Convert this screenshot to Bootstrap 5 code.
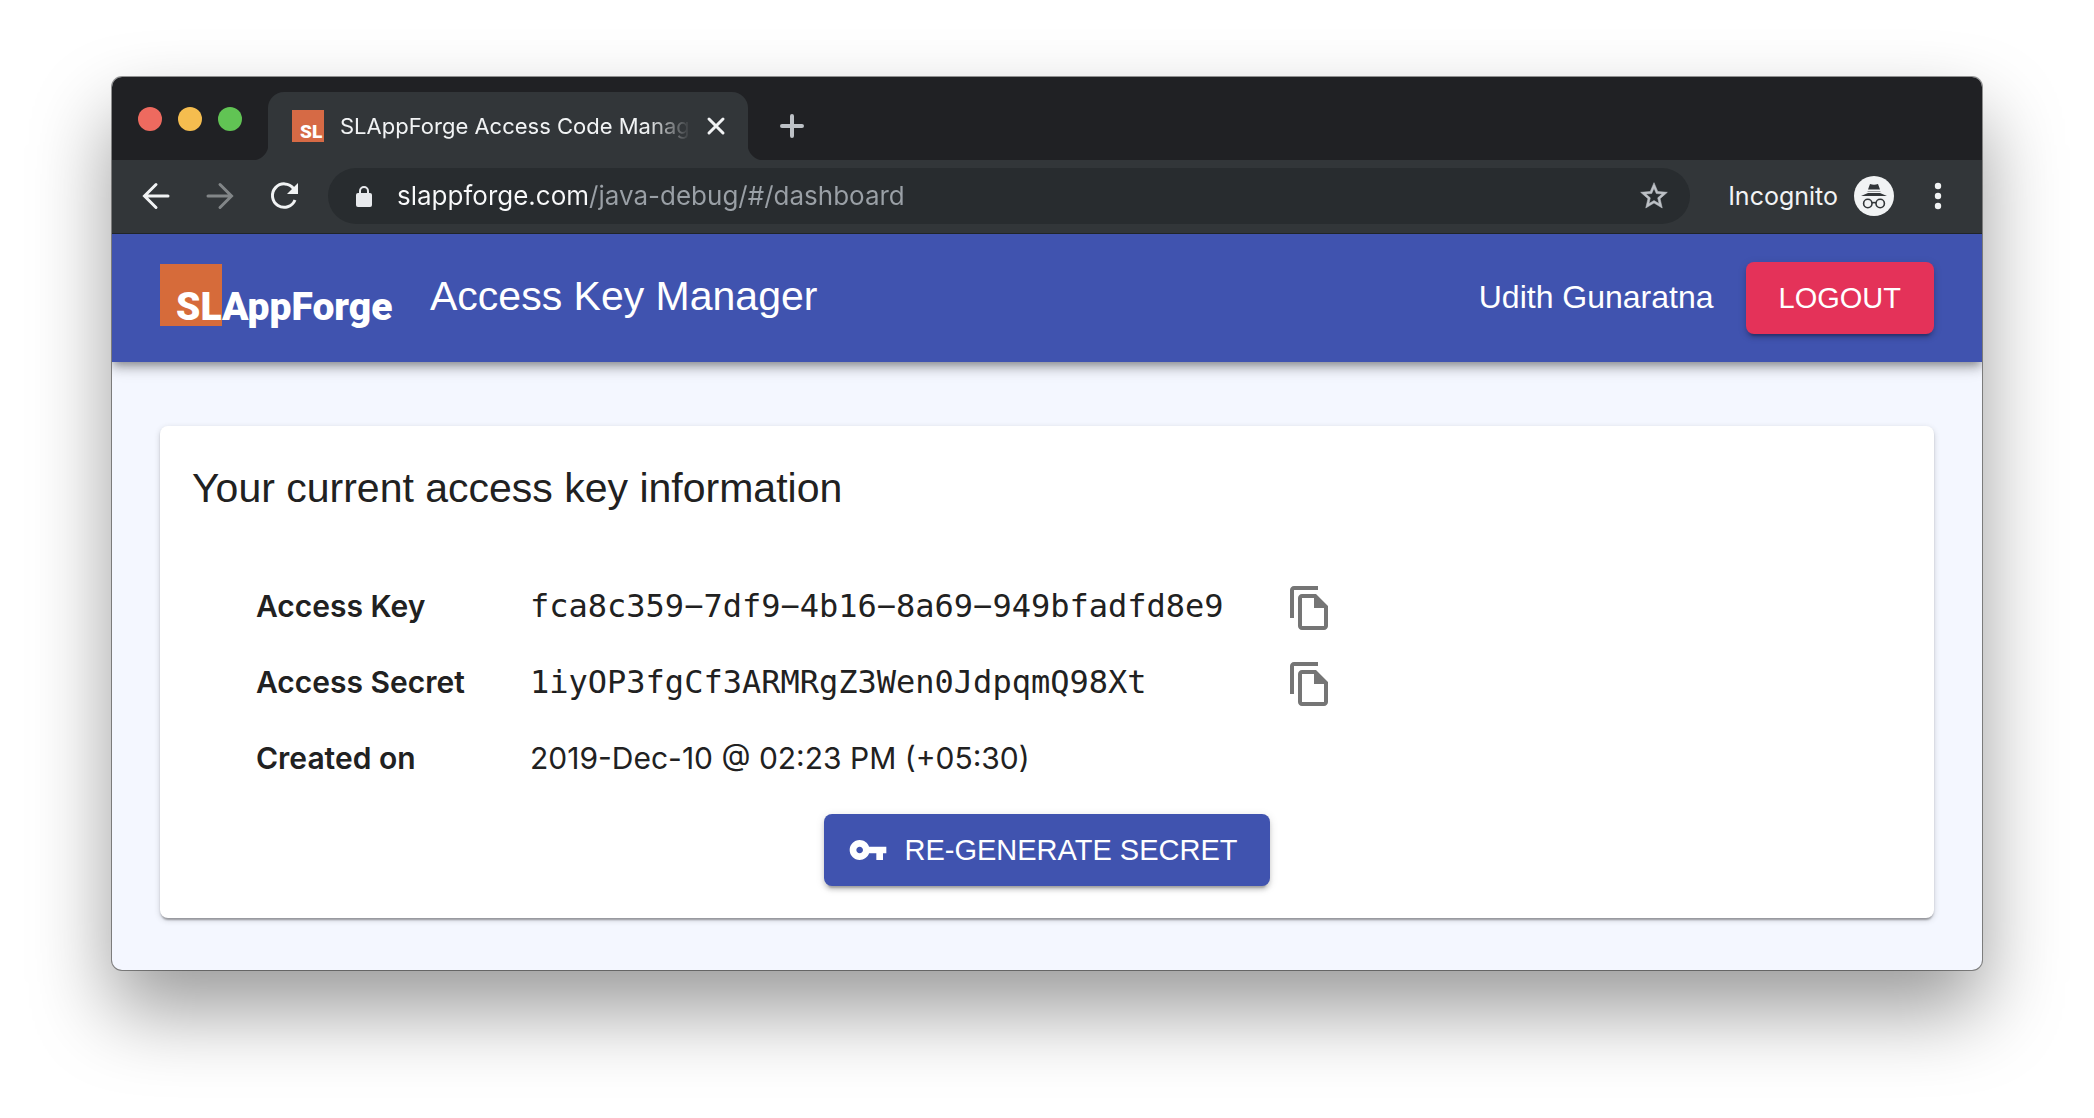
<!DOCTYPE html>
<html lang="en">
<head>
<meta charset="utf-8">
<meta name="viewport" content="width=device-width, initial-scale=1">
<title>SLAppForge Access Code Manager</title>
<link href="https://cdn.jsdelivr.net/npm/bootstrap@5.3.0/dist/css/bootstrap.min.css" rel="stylesheet">
<style>
  :root { --ui: Inter, Roboto, sans-serif; --page: "Liberation Sans", Arial, sans-serif; --indigo: #4053af; --ink: #212121; }
  body { min-height: 100vh; background: #fff; color: var(--ink); font-family: var(--page); padding: 77px 112px; }
  svg { display: block; flex: none; }
  button { font-family: inherit; }
  .browser { border-radius: 10px; background: #f4f7ff; box-shadow: 0 0 0 1px rgba(0,0,0,.4), 0 40px 80px rgba(0,0,0,.4); }
  .plain-btn { display: block; border: 0; background: none; padding: 0; color: #f1f3f4; }

  .tab-strip { background: #202124; height: 83px; border-radius: 10px 10px 0 0; padding: 15px 26px 0; }
  .lights { gap: 16px; padding-top: 15px; margin-right: 26px; }
  .light { width: 24px; height: 24px; border-radius: 50%; }
  .light-close { background: #ee6a5f; }
  .light-min { background: #f5bd4f; }
  .light-max { background: #61c454; }
  .browser-tab { position: relative; width: 480px; height: 68px; background: #323639; border-radius: 16px 16px 0 0; padding: 0 21px 0 24px; color: #f1f3f4; font: 22px/32px var(--ui); }
  .browser-tab::before, .browser-tab::after { content: ""; position: absolute; bottom: 0; width: 16px; height: 16px; }
  .browser-tab::before { right: 100%; background: radial-gradient(circle at 0 0, #202124 16px, #323639 17px); }
  .browser-tab::after { left: 100%; background: radial-gradient(circle at 100% 0, #202124 16px, #323639 17px); }
  .tab-title { margin-left: 16px; margin-right: 14px; overflow: hidden; white-space: nowrap; color: inherit; text-decoration: none;
    -webkit-mask-image: linear-gradient(to right, #000 calc(100% - 44px), transparent); mask-image: linear-gradient(to right, #000 calc(100% - 44px), transparent); }
  .new-tab { margin-left: 32px; }

  .toolbar { background: #323639; height: 74px; border-bottom: 1px solid #202528; padding: 8px 36px 10px 28px; font: 26px/32px var(--ui); color: #f1f3f4; }
  .nav-keys { gap: 32px; margin-right: 28px; }
  .omnibox { background: #282c2f; border-radius: 28px; height: 56px; padding: 0 20px 0 27px; }
  .url-input { border: 0; outline: 0; padding: 0; margin-left: 24px; min-width: 0; font: inherit; color: #9aa0a6;
    background: linear-gradient(to right, #f8f9fa 192px, #9aa0a6 192px); -webkit-background-clip: text; background-clip: text; -webkit-text-fill-color: transparent; }
  .profile { margin-left: 38px; gap: 16px; font-size: 25px; }
  .menu-key { margin-left: 36px; }

  .app-bar { position: relative; min-height: 128px; padding: 0 48px; background: var(--indigo); color: #fff; clip-path: inset(0 0 -32px 0);
    box-shadow: 0 4px 8px -2px rgba(0,0,0,.3), 0 8px 10px rgba(0,0,0,.14), 0 2px 20px rgba(0,0,0,.12); }
  .bar-title { font-size: 41px; line-height: 64px; margin: 0 0 0 32px; padding-bottom: 4px; font-weight: 400; }
  .user-name { font-size: 32px; line-height: 48px; margin-right: 32px; padding-bottom: 2px; }
  .raised { border: 0; border-radius: 8px; color: #fff; font-size: 29px; line-height: 48px; padding: 12px 33px; text-transform: uppercase;
    box-shadow: 0 6px 2px -4px rgba(0,0,0,.2), 0 4px 4px rgba(0,0,0,.14), 0 2px 10px rgba(0,0,0,.12); }
  .raised-red { background: #e43259; }
  .raised-indigo { background: var(--indigo); padding: 12px 32px 12px 24px; gap: 16px; }

  .dash { padding: 64px 48px 52px; }
  .key-card { background: #fff; border-radius: 8px; padding: 30px 32px 32px;
    box-shadow: 0 4px 2px -2px rgba(0,0,0,.2), 0 2px 2px rgba(0,0,0,.14), 0 2px 6px rgba(0,0,0,.16); }
  .card-head { font-size: 41px; line-height: 64px; font-weight: 400; margin: 0 0 50px; }
  .key-table { margin: 0 64px 16px; font: 30px/48px var(--ui); }
  .key-table th, .key-table td { height: 76px; padding: 0 0 5px; vertical-align: middle; }
  .key-table th { width: 274px; font-weight: 600; }
  .key-table td { width: 756px; }
  .key-table td.copy-cell { width: 48px; padding: 0; }
  .key-table .mono { font: 32px/48px "DejaVu Sans Mono", monospace; }
</style>
</head>
<body>
<div class="browser">
  <div class="tab-strip d-flex align-items-start">
    <div class="lights d-flex">
      <span class="light light-close"></span><span class="light light-min"></span><span class="light light-max"></span>
    </div>
    <div class="browser-tab d-flex align-items-center">
      <svg width="32" height="32" viewBox="0 0 32 32"><rect width="32" height="32" fill="#d66a45"/><text x="8" y="28" font-family="Roboto, sans-serif" font-weight="900" font-size="19" fill="#fff">SL</text></svg>
      <a class="tab-title flex-fill" href="#">SLAppForge Access Code Manager</a>
      <button class="plain-btn" aria-label="Close tab"><svg width="22" height="22" viewBox="0 0 22 22"><path d="M4 4l14 14M18 4L4 18" stroke="#f1f3f4" stroke-width="3" stroke-linecap="round"/></svg></button>
    </div>
    <button class="plain-btn new-tab" aria-label="New tab"><svg width="24" height="68" viewBox="0 0 24 68"><path d="M2 34h20M12 24v20" stroke="#bdc1c6" stroke-width="4" stroke-linecap="round"/></svg></button>
  </div>

  <div class="toolbar d-flex align-items-center">
    <div class="nav-keys d-flex">
      <button class="plain-btn" aria-label="Back"><svg width="32" height="32" viewBox="0 0 32 32" fill="none" stroke="#f1f3f4" stroke-width="3" stroke-linecap="round"><path d="M28 16H5M16 4.500L4.500 16L16 27.500"/></svg></button>
      <button class="plain-btn" aria-label="Forward"><svg width="32" height="32" viewBox="0 0 32 32" fill="none" stroke="#828688" stroke-width="3" stroke-linecap="round"><path d="M4 16H27M16 4.500L27.500 16L16 27.500"/></svg></button>
      <button class="plain-btn" aria-label="Reload"><svg width="32" height="32" viewBox="0 0 32 32"><path d="M25.500 8.500A11.700 11.700 0 1 0 27 20" fill="none" stroke="#f1f3f4" stroke-width="3"/><path d="M30 3v11H19z" fill="#f1f3f4"/></svg></button>
    </div>
    <div class="omnibox d-flex align-items-center flex-fill">
      <svg width="18" height="24" viewBox="0 0 18 24"><path d="M5 11V7a4 4 0 0 1 8 0v4" fill="none" stroke="#e8eaed" stroke-width="2"/><rect x="1" y="9" width="16" height="14" rx="2" fill="#e8eaed"/></svg>
      <input class="url-input flex-fill" type="text" aria-label="Address" value="slappforge.com/java-debug/#/dashboard">
      <button class="plain-btn" aria-label="Bookmark"><svg width="32" height="32" viewBox="0 0 24 24"><path fill="#bdc1c6" stroke="#bdc1c6" stroke-width=".4" d="M22 9.240l-7.190-.62L12 2 9.190 8.630 2 9.240l5.460 4.730L5.820 21 12 17.270 18.180 21l-1.630-7.030L22 9.240zM12 15.400l-3.760 2.270 1-4.280-3.320-2.880 4.380-.38L12 6.100l1.710 4.040 4.380.38-3.320 2.880 1 4.280L12 15.400z"/></svg></button>
    </div>
    <div class="profile d-flex align-items-center">
      <span>Incognito</span>
      <svg width="40" height="40" viewBox="0 0 40 40"><circle cx="20" cy="20" r="20" fill="#f1f3f4"/><path d="M16 8q4 1.600 8 0l2 5.500H14zM7 20l7-3h12l7 3z" fill="#323639"/><path d="M13.500 15.500h13" stroke="#9a9c9e" stroke-width="1"/><g fill="none" stroke="#323639" stroke-width="1.600"><circle cx="13.800" cy="27.500" r="4.200"/><circle cx="26.200" cy="27.500" r="4.200"/><path d="M18 27q2-1 4 0"/></g></svg>
    </div>
    <button class="plain-btn menu-key" aria-label="Menu"><svg width="16" height="32" viewBox="0 0 16 32" fill="#f1f3f4"><circle cx="8" cy="6" r="3.200"/><circle cx="8" cy="16" r="3.200"/><circle cx="8" cy="26" r="3.200"/></svg></button>
  </div>

  <header class="app-bar d-flex align-items-center">
    <svg width="238" height="68" viewBox="0 0 238 68" overflow="visible" role="img" aria-label="SLAppForge"><rect width="62" height="62" fill="#d66b3a"/><text x="16" y="56" font-family="Roboto, sans-serif" font-weight="900" font-size="39" fill="#fff">SLAppForge</text></svg>
    <h1 class="bar-title">Access Key Manager</h1>
    <span class="user-name ms-auto">Udith Gunaratna</span>
    <button class="raised raised-red">Logout</button>
  </header>

  <main class="dash">
    <section class="key-card">
      <h2 class="card-head">Your current access key information</h2>
      <table class="key-table">
        <tbody>
          <tr>
            <th scope="row">Access Key</th>
            <td class="mono">fca8c359−7df9−4b16−8a69−949bfadfd8e9</td>
            <td class="copy-cell"><button class="plain-btn" aria-label="Copy access key"><svg width="48" height="48" viewBox="0 0 24 24" fill="#757575"><path d="M16 1H4c-1.100 0-2 .9-2 2v14h2V3h12V1zm-1 4H8c-1.100 0-1.990.9-1.990 2L6 21c0 1.100.89 2 1.990 2H19c1.100 0 2-.9 2-2V11l-6-6zM8 21V7h6v5h5v9H8z"/></svg></button></td>
          </tr>
          <tr>
            <th scope="row">Access Secret</th>
            <td class="mono">1iyOP3fgCf3ARMRgZ3Wen0JdpqmQ98Xt</td>
            <td class="copy-cell"><button class="plain-btn" aria-label="Copy access secret"><svg width="48" height="48" viewBox="0 0 24 24" fill="#757575"><path d="M16 1H4c-1.100 0-2 .9-2 2v14h2V3h12V1zm-1 4H8c-1.100 0-1.990.9-1.990 2L6 21c0 1.100.89 2 1.990 2H19c1.100 0 2-.9 2-2V11l-6-6zM8 21V7h6v5h5v9H8z"/></svg></button></td>
          </tr>
          <tr>
            <th scope="row">Created on</th>
            <td>2019-Dec-10 @ 02:23 PM (+05:30)</td>
            <td class="copy-cell"></td>
          </tr>
        </tbody>
      </table>
      <div class="d-flex justify-content-center">
        <button class="raised raised-indigo d-flex align-items-center"><svg width="40" height="40" viewBox="0 0 24 24" fill="#fff"><path d="M12.650 10C11.830 7.670 9.610 6 7 6c-3.310 0-6 2.690-6 6s2.690 6 6 6c2.610 0 4.830-1.670 5.650-4H17v4h4v-4h2v-4H12.650zM7 14c-1.100 0-2-.9-2-2s.9-2 2-2 2 .9 2 2-.9 2-2 2z"/></svg>Re-generate secret</button>
      </div>
    </section>
  </main>
</div>
<script src="https://cdn.jsdelivr.net/npm/bootstrap@5.3.0/dist/js/bootstrap.bundle.min.js"></script>
</body>
</html>
